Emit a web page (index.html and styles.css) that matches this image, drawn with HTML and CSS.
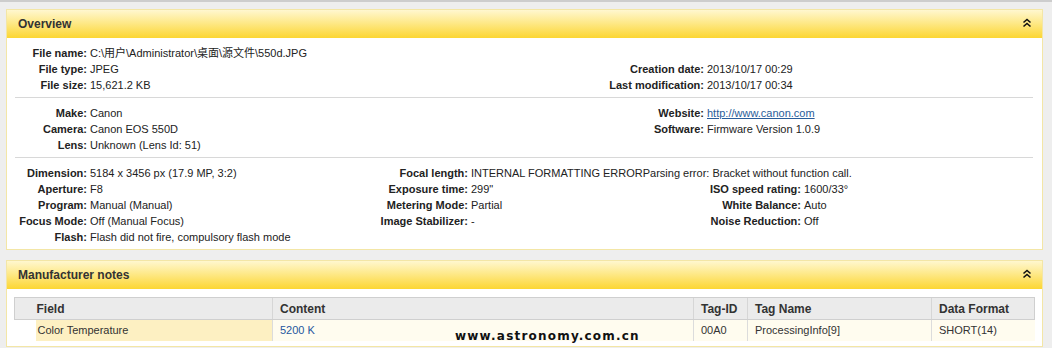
FILE: index.html
```html
<!DOCTYPE html>
<html>
<head>
<meta charset="utf-8">
<link rel="stylesheet" href="styles.css">
</head>
<body>
<div class="page">
  <section class="panel overview">
    <header class="panel-head">
      <span class="panel-title">Overview</span>
      <svg class="chev" width="10" height="10" viewBox="0 0 10 10"><path d="M1.5 4.5 L5 1.5 L8.5 4.5 M1.5 8.5 L5 5.5 L8.5 8.5" fill="none" stroke="#111" stroke-width="1.6"/></svg>
    </header>
    <div class="panel-body">
      <div class="sec sec-two s1">
        <div class="col col-a">
          <span class="lbl">File name:</span><span class="val">C:\用户\Administrator\桌面\源文件\550d.JPG</span>
          <span class="lbl">File type:</span><span class="val">JPEG</span>
          <span class="lbl">File size:</span><span class="val">15,621.2 KB</span>
        </div>
        <div class="col col-b">
          <span class="lbl"></span><span class="val">&nbsp;</span>
          <span class="lbl">Creation date:</span><span class="val">2013/10/17 00:29</span>
          <span class="lbl">Last modification:</span><span class="val">2013/10/17 00:34</span>
        </div>
      </div>
      <div class="sec sec-two s2">
        <div class="col col-a">
          <span class="lbl">Make:</span><span class="val">Canon</span>
          <span class="lbl">Camera:</span><span class="val">Canon EOS 550D</span>
          <span class="lbl">Lens:</span><span class="val">Unknown (Lens Id: 51)</span>
        </div>
        <div class="col col-b">
          <span class="lbl">Website:</span><span class="val"><a class="link" href="#">http://www.canon.com</a></span>
          <span class="lbl">Software:</span><span class="val">Firmware Version 1.0.9</span>
        </div>
      </div>
      <div class="sec sec-three s3">
        <div class="col col-a">
          <span class="lbl">Dimension:</span><span class="val">5184 x 3456 px (17.9 MP, 3:2)</span>
          <span class="lbl">Aperture:</span><span class="val">F8</span>
          <span class="lbl">Program:</span><span class="val">Manual (Manual)</span>
          <span class="lbl">Focus Mode:</span><span class="val">Off (Manual Focus)</span>
          <span class="lbl">Flash:</span><span class="val">Flash did not fire, compulsory flash mode</span>
        </div>
        <div class="col col-m">
          <span class="lbl">Focal length:</span><span class="val">INTERNAL FORMATTING ERRORParsing error: Bracket without function call.</span>
          <span class="lbl">Exposure time:</span><span class="val">299"</span>
          <span class="lbl">Metering Mode:</span><span class="val">Partial</span>
          <span class="lbl">Image Stabilizer:</span><span class="val">-</span>
        </div>
        <div class="col col-r">
          <span class="lbl"></span><span class="val">&nbsp;</span>
          <span class="lbl">ISO speed rating:</span><span class="val">1600/33°</span>
          <span class="lbl">White Balance:</span><span class="val">Auto</span>
          <span class="lbl">Noise Reduction:</span><span class="val">Off</span>
        </div>
      </div>
    </div>
  </section>

  <section class="panel notes">
    <header class="panel-head">
      <span class="panel-title">Manufacturer notes</span>
      <svg class="chev" width="10" height="10" viewBox="0 0 10 10"><path d="M1.5 4.5 L5 1.5 L8.5 4.5 M1.5 8.5 L5 5.5 L8.5 8.5" fill="none" stroke="#111" stroke-width="1.6"/></svg>
    </header>
    <div class="panel-body tbl-wrap">
      <table class="tbl">
        <thead>
          <tr>
            <th class="c-blank"></th>
            <th class="c-field">Field</th>
            <th class="c-content">Content</th>
            <th class="c-tagid">Tag-ID</th>
            <th class="c-tagname">Tag Name</th>
            <th class="c-format">Data Format</th>
          </tr>
        </thead>
        <tbody>
          <tr>
            <td class="c-blank"></td>
            <td class="c-field hl">Color Temperature</td>
            <td class="c-content blue">5200 K</td>
            <td class="c-tagid">00A0</td>
            <td class="c-tagname">ProcessingInfo[9]</td>
            <td class="c-format">SHORT(14)</td>
          </tr>
        </tbody>
      </table>
    </div>
  </section>
  <div class="watermark">www.astronomy.com.cn</div>
</div>
</body>
</html>
```
FILE: styles.css
```css
* { box-sizing: border-box; }
html, body { margin: 0; padding: 0; }
body {
  width: 1052px;
  height: 348px;
  overflow: hidden;
  background: #eeeeee;
  border-top: 2px solid #cdcdcd;
  font-family: "Liberation Sans", Arial, "Noto Sans CJK SC", sans-serif;
  font-size: 11px;
  color: #222;
}
.page {
  position: relative;
  padding: 7px 9px 0 6px;
}
.panel {
  border: 1px solid #f3e6a6;
  background: #fff;
}
.notes { margin-top: 10px; }
.panel-head {
  height: 28px;
  display: flex;
  align-items: center;
  justify-content: space-between;
  padding: 0 10px 0 11px;
  background: linear-gradient(#fff7cf 0%, #fee98a 45%, #fcd632 100%);
}
.panel-title {
  font-weight: bold;
  font-size: 12px;
  color: #333;
}
.chev { display: block; margin-top: -2px; }
.panel-body { padding: 0 9px 0 8px; }

.sec { display: flex; line-height: 16px; }
.sec-two .col { flex: 0 0 509px; }
.s1 { padding: 7px 0 4px; border-bottom: 1px solid #d8d8d8; }
.s2 { padding: 7px 0 4px; border-bottom: 1px solid #d8d8d8; }
.s3 { padding: 7px 0 4px; }
.col {
  display: grid;
  column-gap: 3px;
  align-content: start;
  min-width: 0;
}
.sec-two .col-a { grid-template-columns: 72px minmax(0, 1fr); }
.sec-two .col-b { grid-template-columns: 180px minmax(0, 1fr); }
.sec-three .col-a { flex: 0 0 339px; grid-template-columns: 72px minmax(0, 1fr); }
.sec-three .col-m { flex: 0 0 340px; grid-template-columns: 114px minmax(0, 1fr); }
.sec-three .col-r { flex: 1 1 0; grid-template-columns: 107px minmax(0, 1fr); }
.lbl {
  text-align: right;
  font-weight: bold;
  color: #222;
  white-space: nowrap;
}
.val { white-space: nowrap; color: #222; }
.link { color: #2a5d9a; text-decoration: underline; }

.tbl-wrap { padding: 8px 7px 5px 7px; }
.tbl {
  width: 100%;
  border-collapse: collapse;
  table-layout: fixed;
}
.tbl th {
  height: 22px;
  text-align: left;
  font-size: 12px;
  font-weight: bold;
  color: #333;
  background: #ebebeb;
  border-top: 1px solid #cfcfcf;
  border-bottom: 1px solid #cfcfcf;
  border-left: 1px solid #d6d6d6;
  padding: 0 7px;
}
.tbl th.c-blank { border-left: 1px solid #cfcfcf; }
.tbl th.c-field { border-left: none; padding-left: 1px; }
.tbl th.c-format { border-right: 1px solid #cfcfcf; }
.tbl td {
  height: 21px;
  padding: 0 7px;
  background: #fffcef;
  border-left: 1px solid #dcdcdc;
  color: #333;
}
.tbl td.c-blank { background: #fff; border-left: none; }
.tbl td.c-field { border-left: none; padding-left: 2px; }
.tbl td.c-format { border-right: none; }
.tbl td.hl { background: #fdf0c2; }
.tbl .blue { color: #1f57a0; }
.c-blank { width: 21px; }
.c-field { width: 237px; }
.c-content { width: 421px; }
.c-tagid { width: 54px; }
.c-tagname { width: 184px; }
.c-format { width: auto; }

.watermark {
  position: absolute;
  left: 455px;
  top: 327px;
  font-family: "DejaVu Sans", Verdana, sans-serif;
  font-weight: bold;
  font-size: 12px;
  letter-spacing: 1.2px;
  color: #111;
}
```
